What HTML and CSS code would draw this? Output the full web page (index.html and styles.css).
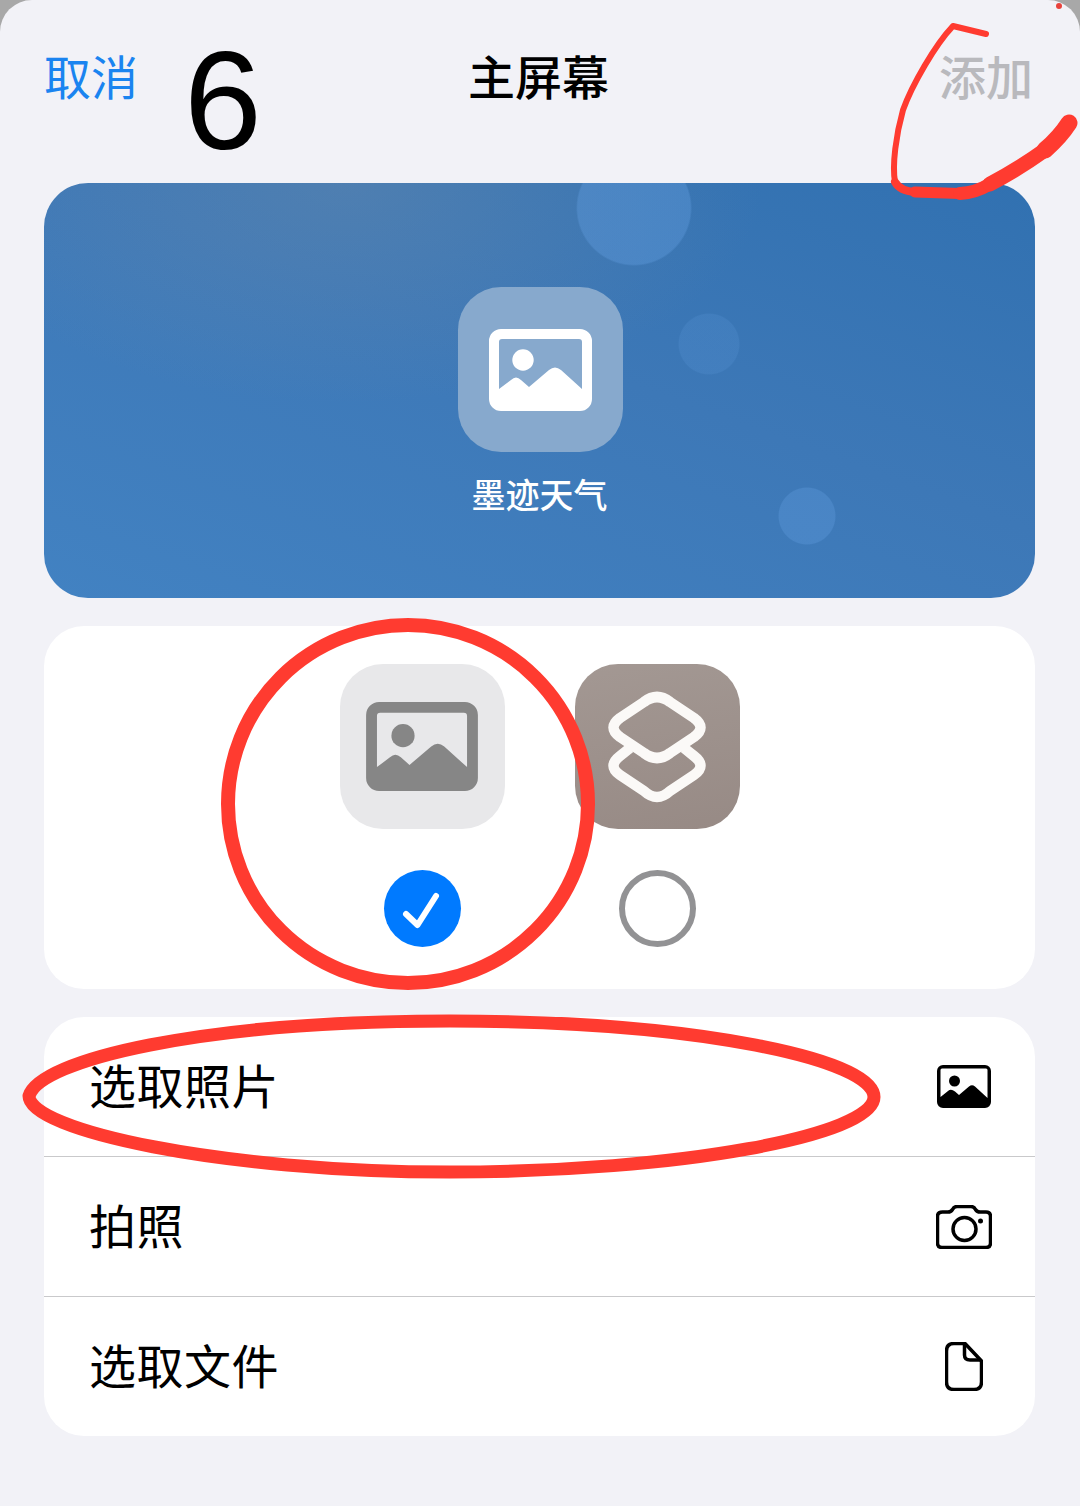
FILE: index.html
```html
<!DOCTYPE html>
<html lang="zh-CN">
<head>
    <meta charset="UTF-8">
    <meta name="viewport" content="width=device-width, initial-scale=1.0">
    <title>主屏幕</title>
    <link rel="stylesheet" href="styles.css">
</head>
<body>
    <!-- Shared picture glyph, used by the preview and the picker -->
    <svg class="defs" width="0" height="0" aria-hidden="true">
        <symbol id="picture" viewBox="0 0 103 82">
            <path fill-rule="evenodd" d="M12 0H91A12 12 0 0 1 103 12V70A12 12 0 0 1 91 82H12A12 12 0 0 1 0 70V12A12 12 0 0 1 12 0ZM13 10H90A3 3 0 0 1 93 13V60L72 41Q66 36 60 41L40 58L32 51Q27 46 22 51L10 60V13A3 3 0 0 1 13 10Z"/>
            <circle cx="34" cy="31" r="10.7"/>
        </symbol>
    </svg>

    <div class="sheet">
        <header class="nav">
            <span class="nav-cancel">取消</span>
            <span class="nav-title">主屏幕</span>
            <span class="nav-add">添加</span>
        </header>

        <section class="preview">
            <div class="app-icon app-icon-preview">
                <svg class="glyph-preview"><use href="#picture"/></svg>
            </div>
            <div class="preview-name">墨迹天气</div>
        </section>

        <section class="card picker">
            <div class="picker-item">
                <div class="app-icon app-icon-plain">
                    <svg class="glyph-plain"><use href="#picture"/></svg>
                </div>
                <div class="radio radio-on">
                    <svg width="77" height="77" viewBox="0 0 77 77"><path d="M22 44L33.5 55L52 26" fill="none" stroke="#fff" stroke-width="6" stroke-linecap="round" stroke-linejoin="round"/></svg>
                </div>
            </div>
            <div class="picker-item">
                <div class="app-icon app-icon-shortcuts">
                    <svg class="glyph-shortcuts" width="100" height="112" viewBox="0 0 100 112">
                        <g fill="none" stroke="#fbf9f7" stroke-width="10.5" stroke-linejoin="round">
                            <path d="M22 57L12 65Q-1 75 12 84L36 100Q49 112 62 100L86 84Q99 75 86 65L76 57"/>
                            <path d="M36 11Q49 1 62 11L86 27Q99 36.5 86 46L62 62Q49 72 36 62L12 46Q-1 36.5 12 27Z"/>
                        </g>
                    </svg>
                </div>
                <div class="radio radio-off"></div>
            </div>
        </section>

        <section class="card actions">
            <div class="action-row">
                <span>选取照片</span>
                <svg class="pic-icon" width="54" height="43" viewBox="0 0 54 43">
                    <path fill-rule="evenodd" d="M6 0H48A6 6 0 0 1 54 6V37A6 6 0 0 1 48 43H6A6 6 0 0 1 0 37V6A6 6 0 0 1 6 0ZM5 3.5H49A1.5 1.5 0 0 1 50.5 5V33L38 21.5Q35 19 32 21.5L22 30L18 26.5Q14 23.5 11 26L3.5 32V5A1.5 1.5 0 0 1 5 3.5Z"/>
                    <circle cx="17.5" cy="16" r="5.5"/>
                </svg>
            </div>
            <div class="action-row">
                <span>拍照</span>
                <svg width="56" height="44" viewBox="0 0 56 44" fill="none" stroke="#000" stroke-width="3.5">
                    <path d="M6.5 7H12Q15 7 16.5 4.5Q18 1.5 21 1.5H35Q38 1.5 39.5 4.5Q41 7 44 7H50Q54.5 7 54.5 11.5V38Q54.5 42.5 50 42.5H6Q1.5 42.5 1.5 38V11.5Q1.5 7 6.5 7Z"/>
                    <circle cx="28.5" cy="24" r="11.5"/>
                    <circle cx="44.5" cy="16" r="2.5" fill="#000" stroke="none"/>
                </svg>
            </div>
            <div class="action-row">
                <span>选取文件</span>
                <svg class="doc-icon" width="38" height="49" viewBox="0 0 38 49" fill="none" stroke="#000" stroke-width="3.5" stroke-linejoin="round">
                    <path d="M9 1.5H20L36.5 19V40Q36.5 47.5 29 47.5H9Q1.5 47.5 1.5 40V9Q1.5 1.5 9 1.5Z"/>
                    <path d="M19.5 2V13Q19.5 18 25 18H36"/>
                </svg>
            </div>
        </section>
    </div>

    <!-- Red pen marks and the big number drawn on top of the screenshot -->
    <div class="mark-number">6</div>
    <svg class="marks" width="1080" height="1506" viewBox="0 0 1080 1506">
        <circle cx="1059" cy="6" r="3" fill="#e8423c"/>
        <g fill="none" stroke="#ff3b30" stroke-linecap="round" stroke-linejoin="round">
            <path stroke-width="6" d="M986 34L953 26C935 45 912 85 903 110C896 135 892 165 895 182"/>
            <path stroke-width="8" d="M895 182Q900 191 915 192"/>
            <path stroke-width="11" d="M915 192L960 193.5"/>
            <path stroke-width="13" d="M960 193.5Q975 193 990 184"/>
            <path stroke-width="15" d="M990 184Q1020 168 1045 150"/>
            <path stroke-width="17" d="M1045 150Q1060 137 1069 123"/>
            <ellipse cx="408" cy="804" rx="180" ry="179" stroke-width="14"/>
            <path stroke-width="13" d="M29 1096C40 1060 200 1021 450 1021C700 1021 874 1060 874 1097C874 1135 680 1172 450 1172C220 1172 29 1130 29 1096Z"/>
        </g>
    </svg>
</body>
</html>
```

FILE: styles.css
```css
/* General page styling */
* {
    box-sizing: border-box;
}

html,
body {
    margin: 0;
    height: 1506px;
    overflow: hidden;
}

body {
    position: relative;
    background-color: #a8a8a8; /* Dimmed page behind the sheet corners */
    font-family: "Noto Sans CJK SC", "Noto Sans", sans-serif;
    color: #000;
}

.defs {
    display: block;
    height: 0;
}

.sheet {
    height: 1506px;
    padding: 0 45px 0 44px;
    background-color: #f2f2f7;
    border-radius: 32px 32px 0 0;
}

/* Top bar */
.nav {
    display: grid;
    grid-template-columns: 1fr auto 1fr;
    align-items: center;
    height: 183px;
    padding: 47px 2px 80px 0;
    font-size: 47px;
    line-height: 56px;
}

.nav-cancel {
    color: #1a84f0;
}

.nav-title {
    font-weight: 500;
}

.nav-add {
    justify-self: end;
    color: #b9b9bd;
    font-weight: 500;
}

/* Blue preview card */
.preview {
    display: flex;
    flex-direction: column;
    align-items: center;
    height: 415px;
    padding: 104px 0 0 2px;
    border-radius: 44px;
    background-color: #3f7cba;
    background-image:
        radial-gradient(circle 58px at 590px 25px, rgba(96, 156, 222, 0.4) 97%, transparent 100%),
        radial-gradient(circle 31px at 665px 161px, rgba(96, 156, 222, 0.2) 96%, transparent 100%),
        radial-gradient(circle 29px at 763px 333px, rgba(96, 156, 222, 0.35) 96%, transparent 100%),
        radial-gradient(ellipse 420px 220px at 300px 0, rgba(110, 140, 170, 0.4) 0%, rgba(110, 140, 170, 0) 100%),
        linear-gradient(200deg, #3171b1 0%, #3d78b7 45%, #4282c2 100%);
}

.app-icon {
    display: flex;
    align-items: center;
    justify-content: center;
    width: 165px;
    height: 165px;
    border-radius: 43px;
}

.app-icon-preview {
    background-color: #87a9cd;
}

.glyph-preview {
    width: 103px;
    height: 82px;
    fill: #fff;
}

.preview-name {
    margin: 18px 0 0 -2px;
    color: #fff;
    font-size: 34px;
    line-height: 48px;
    font-weight: 500;
}

/* White cards */
.card {
    background-color: #fff;
    border-radius: 40px;
}

.picker {
    display: flex;
    justify-content: center;
    gap: 70px;
    height: 363px;
    margin-top: 28px;
    padding: 38px 0 0 1px;
}

.picker-item {
    display: flex;
    flex-direction: column;
    align-items: center;
    gap: 41px;
}

.app-icon-plain {
    background-color: #e8e8ea;
}

.glyph-plain {
    width: 112px;
    height: 89px;
    margin-left: -1px;
    fill: #868686;
}

.app-icon-shortcuts {
    background-image: linear-gradient(170deg, #a39893 0%, #978a85 100%);
}

.glyph-shortcuts {
    overflow: visible;
}

.radio {
    width: 77px;
    height: 77px;
    border-radius: 50%;
}

.radio-on {
    background-color: #007aff;
}

.radio-on svg {
    display: block;
}

.radio-off {
    border: 6px solid #929294;
}

/* Action list */
.actions {
    margin-top: 28px;
    overflow: hidden;
}

.action-row {
    display: flex;
    align-items: center;
    justify-content: space-between;
    height: 140px;
    padding: 0 43px 7px 45px;
    font-size: 47px;
    letter-spacing: 0.5px;
    border-bottom: 1px solid #c9c9cb;
}

.action-row svg {
    margin-top: 7px;
}

.action-row:last-child {
    height: 139px;
    border-bottom: none;
}

.pic-icon {
    margin-right: 1px;
}

.doc-icon {
    margin-right: 9px;
}

/* Annotations over the screenshot */
.mark-number {
    position: absolute;
    left: 184px;
    top: 21px;
    font-family: "Liberation Sans", Arial, sans-serif;
    font-size: 140px;
    line-height: 160px;
}

.marks {
    position: absolute;
    left: 0;
    top: 0;
    pointer-events: none;
}
```
